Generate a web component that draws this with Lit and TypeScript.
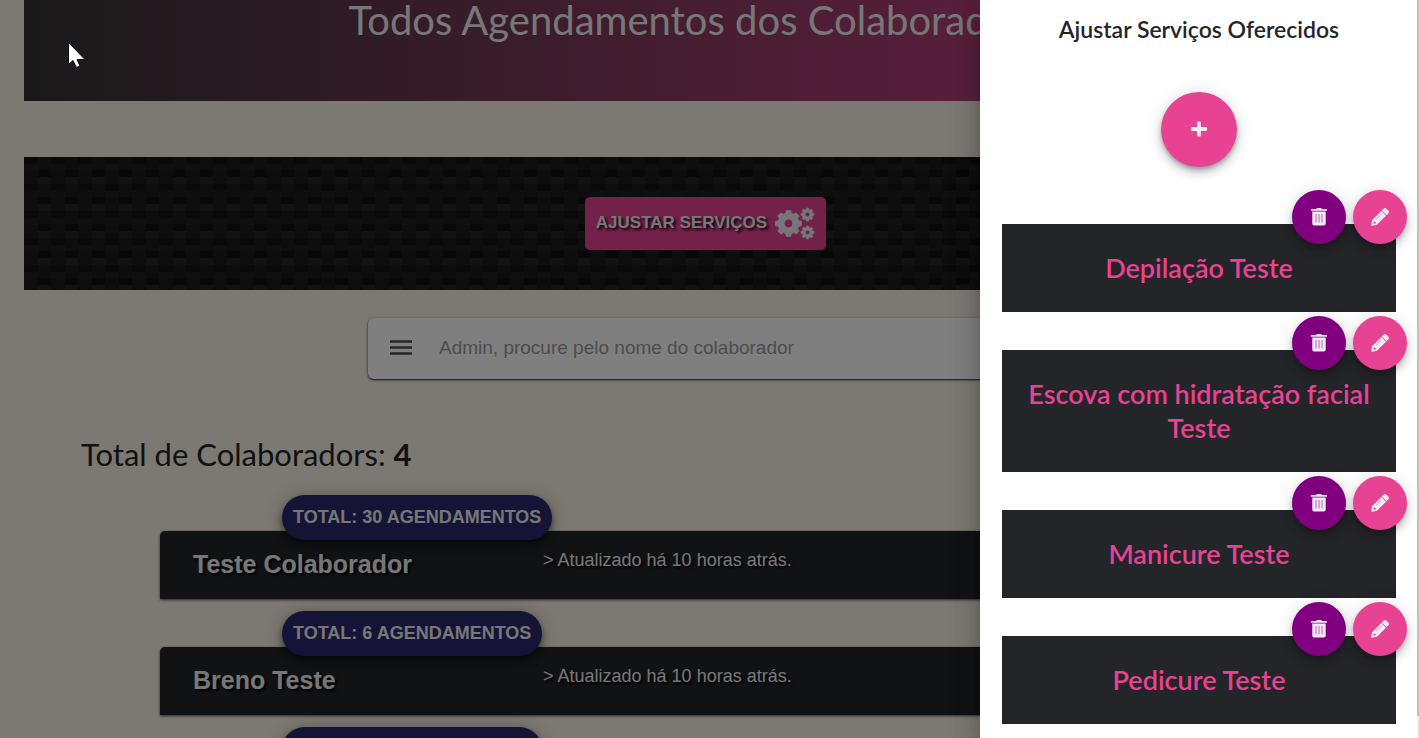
import { LitElement, html, css, svg } from "lit";
import { customElement, property } from "lit/decorators.js";

/** Closed outline of a cog wheel with a round hole in its middle. */
function gearPath(cx: number, cy: number, outer: number, inner: number, hole: number, teeth: number): string {
  const step = (Math.PI * 2) / teeth;
  const points: string[] = [];
  for (let i = 0; i < teeth; i++) {
    const mid = i * step - Math.PI / 2;
    const corners: Array<[number, number]> = [
      [inner, -0.32],
      [outer, -0.22],
      [outer, 0.22],
      [inner, 0.32],
    ];
    for (const [radius, turn] of corners) {
      const angle = mid + turn * step;
      points.push(`${(cx + radius * Math.cos(angle)).toFixed(2)} ${(cy + radius * Math.sin(angle)).toFixed(2)}`);
    }
  }
  return (
    `M${points.join("L")}Z` +
    `M${cx - hole} ${cy}a${hole} ${hole} 0 1 0 ${hole * 2} 0a${hole} ${hole} 0 1 0 ${-hole * 2} 0Z`
  );
}

const gears = html`<svg class="gears" width="40" height="34" viewBox="0 0 40 34" aria-hidden="true">
  ${svg`<path fill-rule="evenodd" fill="currentColor" stroke="currentColor" stroke-width="1" stroke-linejoin="round"
    d="${gearPath(13.5, 17.5, 13, 10.5, 4.4, 8)}" />
  <path fill-rule="evenodd" fill="currentColor" stroke="currentColor" stroke-width=".6" stroke-linejoin="round"
    d="${gearPath(32.5, 8.5, 6.6, 5.2, 2.3, 8)}" />
  <path fill-rule="evenodd" fill="currentColor" stroke="currentColor" stroke-width=".6" stroke-linejoin="round"
    d="${gearPath(32.5, 26.5, 6.6, 5.2, 2.3, 8)}" />`}
</svg>`;

const trash = html`<svg width="18" height="18" viewBox="0 0 18 18" aria-hidden="true">
  <path fill="currentColor" fill-rule="evenodd"
    d="M6.800 0h4.400l.6.9H16.500a.5.5 0 0 1 .5.500v1.300H1V1.400a.5.5 0 0 1 .5-.5h4.700zM2.300 3.600h13.400v12.200a1.700 1.700 0 0 1-1.700 1.700H4A1.700 1.700 0 0 1 2.300 15.800z" />
  <path fill="none" stroke="#b565b5" stroke-width="1" d="M6 6v8.500M9 6v8.500M12 6v8.500" />
</svg>`;

const pencil = html`<svg width="18" height="18" viewBox="0 0 18 18" aria-hidden="true">
  <path fill="currentColor" fill-rule="evenodd"
    d="M12.600 .7a2 2 0 0 1 2.800 0L17.300 2.600a2 2 0 0 1 0 2.800l-1.800 1.800-4.700-4.700zM10.300 3L15 7.700 5.900 16.800 .9 17.700a.6.6 0 0 1-.7-.7L1.100 12.200zM2.700 13.400l-.4 1.300 1.100 1.100 1.300-.4v-1.500z" />
  <path fill="none" stroke="#ec78b0" stroke-width=".9" d="M5.200 11.200L10.400 6" />
</svg>`;

const plus = html`<svg width="16" height="16" viewBox="0 0 16 16" aria-hidden="true">
  <path fill="currentColor"
    d="M7 .5h2a.9.9 0 0 1 .9.900v4.700h5.200a.9.9 0 0 1 .9.900v2a.9.9 0 0 1-.9.900H9.900v4.700a.9.9 0 0 1-.9.900H7a.9.9 0 0 1-.9-.9V9.900H.9A.9.9 0 0 1 0 9V7a.9.9 0 0 1 .9-.9h5.200V1.400A.9.9 0 0 1 7 .5z" />
</svg>`;

@customElement("staff-card")
class StaffCard extends LitElement {
  @property() name = "";
  @property() note = "";
  @property({ type: Number }) total = 0;

  static styles = css`
    :host {
      display: block;
      position: relative;
      font-family: "Liberation Sans", Arial, sans-serif;
    }
    .card {
      display: grid;
      grid-template-columns: 350px 1fr;
      align-items: start;
      padding: 16px 32px 18px 33px;
      background: #232528;
      color: #eee;
      border-radius: 5px 5px 0 0;
      box-shadow: 0 1px 3px rgba(0, 0, 0, 0.7);
      text-shadow: 2px 2px 3px #000;
    }
    .name {
      margin: 0;
      font-size: 25px;
      line-height: 34px;
      font-weight: 700;
    }
    .note {
      margin: 0;
      font-size: 18px;
      line-height: 26px;
    }
    .badge {
      position: absolute;
      left: 122px;
      top: -36px;
      padding: 0 11px;
      border-radius: 23px;
      background: #2a286e;
      color: #eee;
      font-size: 18px;
      line-height: 45px;
      font-weight: 700;
      text-transform: uppercase;
      white-space: nowrap;
      box-shadow: 0 3px 5px -1px rgba(0, 0, 0, 0.4), 0 6px 10px rgba(0, 0, 0, 0.3), 0 1px 18px rgba(0, 0, 0, 0.24);
    }
  `;

  render() {
    return html`
      <article class="card">
        <h3 class="name">${this.name}</h3>
        <p class="note">&gt; ${this.note}</p>
      </article>
      <span class="badge">Total: ${this.total} agendamentos</span>
    `;
  }
}

@customElement("service-item")
class ServiceItem extends LitElement {
  @property() name = "";

  static styles = css`
    :host {
      display: block;
      position: relative;
    }
    .box {
      padding: 27px 20px;
      background: #242529;
    }
    .name {
      margin: 0;
      color: #e84393;
      font-family: Lato, sans-serif;
      font-size: 27px;
      line-height: 34px;
      font-weight: 600;
      text-align: center;
    }
    .actions {
      position: absolute;
      top: -34px;
      right: -11px;
      display: flex;
      gap: 7px;
    }
    .action {
      display: grid;
      place-items: center;
      width: 54px;
      height: 54px;
      padding: 0;
      border: 0;
      border-radius: 50%;
      color: #f3eaf1;
      cursor: pointer;
      box-shadow: 0 3px 5px -1px rgba(0, 0, 0, 0.2), 0 6px 10px rgba(0, 0, 0, 0.14), 0 1px 18px rgba(0, 0, 0, 0.12);
    }
    .remove {
      background: purple;
    }
    .edit {
      background: #e84393;
    }
  `;

  render() {
    return html`
      <div class="box"><h3 class="name">${this.name}</h3></div>
      <div class="actions">
        <button class="action remove" aria-label="Excluir ${this.name}">${trash}</button>
        <button class="action edit" aria-label="Editar ${this.name}">${pencil}</button>
      </div>
    `;
  }
}

@customElement("app-root")
class AppRoot extends LitElement {
  static styles = css`
    :host {
      display: block;
      position: relative;
      height: 100vh;
      overflow: hidden;
      background: #f9f1e4;
      font-family: "Liberation Sans", Arial, sans-serif;
    }
    * {
      box-sizing: border-box;
    }
    .page {
      padding: 0 32px 0 24px;
    }
    .banner {
      padding: 0 0 60px;
      background: linear-gradient(90deg, #333, #e84393);
    }
    .banner-title {
      margin: 0;
      color: #eee;
      font-family: Lato, sans-serif;
      font-size: 40px;
      line-height: 41px;
      font-weight: 400;
      text-align: center;
    }
    /* Woven carbon texture: each layer paints the top left corner of a 27px tile. */
    .toolbar {
      display: flex;
      justify-content: center;
      margin-top: 56px;
      padding: 40px;
      background-color: #1a1a1a;
      background-image: conic-gradient(at 14px 7px, transparent 270deg, #131313 270deg),
        conic-gradient(at 14px 7px, transparent 270deg, #1f1f1f 270deg),
        conic-gradient(at 13px 7px, transparent 270deg, #111 270deg),
        conic-gradient(at 13px 7px, transparent 270deg, #242424 270deg);
      background-position: 0 0, 0 7px, 14px 13px, 14px 20px;
      background-size: 27px 27px;
    }
    .adjust {
      display: flex;
      align-items: center;
      gap: 8px;
      height: 53px;
      padding: 0 11px 2px;
      border: 0;
      border-radius: 5px;
      background: #e84393;
      color: #eee;
      font: 700 17px "Liberation Sans", Arial, sans-serif;
      text-transform: uppercase;
      text-shadow: 2px 2px 3px #000;
      cursor: pointer;
    }
    .search {
      display: flex;
      align-items: center;
      gap: 27px;
      max-width: 675px;
      height: 61px;
      margin: 28px auto 0;
      padding: 0 22px 2px;
      border-radius: 6px;
      background: #fff;
      box-shadow: 0 1px 2px rgba(0, 0, 0, 0.8), 0 1px 4px rgba(0, 0, 0, 0.2);
    }
    .menu {
      display: grid;
      padding: 0;
      border: 0;
      background: none;
      color: #4c4c4c;
      cursor: pointer;
    }
    .query {
      flex: 1;
      min-width: 0;
      padding: 0;
      border: 0;
      outline: 0;
      background: none;
      font: 19px "Liberation Sans", Arial, sans-serif;
      color: #333;
    }
    .query::placeholder {
      color: #999;
      opacity: 1;
    }
    .count {
      margin: 55px 0 0 57px;
      color: #232528;
      font-family: Lato, sans-serif;
      font-size: 31px;
      line-height: 40px;
      font-weight: 400;
    }
    .staff {
      display: grid;
      gap: 48px;
      margin: 57px 136px 0;
    }
    .backdrop {
      position: absolute;
      inset: 0;
      background: rgba(0, 0, 0, 0.5);
    }
    .cursor {
      position: absolute;
      left: 67px;
      top: 41px;
    }
    .drawer {
      position: absolute;
      top: 0;
      right: 0;
      bottom: 0;
      display: flex;
      width: 439px;
      max-width: 100%;
      background: #fff;
      box-shadow: 0 8px 10px -5px rgba(0, 0, 0, 0.2), 0 16px 24px 2px rgba(0, 0, 0, 0.14),
        0 6px 30px 5px rgba(0, 0, 0, 0.12);
    }
    .content {
      flex: 1;
      padding: 13px 21px 0 22px;
      overflow: hidden;
    }
    .rail {
      width: 2px;
      background: #eee;
    }
    .thumb {
      height: 97%;
      background: #c1c1c1;
    }
    .drawer-title {
      margin: 0;
      color: #232528;
      font-family: Lato, sans-serif;
      font-size: 23px;
      line-height: 32px;
      font-weight: 600;
      text-align: center;
    }
    .add {
      display: grid;
      place-items: center;
      width: 76px;
      height: 75px;
      margin: 47px auto 57px;
      padding: 0 0 2px;
      border: 0;
      border-radius: 50%;
      background: #e84393;
      color: #f3eaf1;
      cursor: pointer;
      box-shadow: 0 3px 5px -1px rgba(0, 0, 0, 0.3), 0 6px 10px rgba(0, 0, 0, 0.16), 0 1px 18px rgba(0, 0, 0, 0.12);
    }
    .services {
      display: grid;
      gap: 38px;
    }
  `;

  private staff = [
    { name: "Teste Colaborador", total: 30 },
    { name: "Breno Teste", total: 6 },
    { name: "Ana Teste", total: 2 },
  ];

  private services = ["Depilação Teste", "Escova com hidratação facial Teste", "Manicure Teste", "Pedicure Teste"];

  render() {
    return html`
      <main class="page">
        <header class="banner"><h1 class="banner-title">Todos Agendamentos dos Colaboradores</h1></header>
        <section class="toolbar">
          <button class="adjust">Ajustar serviços ${gears}</button>
        </section>
        <div class="search">
          <button class="menu" aria-label="Menu">
            <svg width="22" height="15" viewBox="0 0 22 15" aria-hidden="true">
              <path fill="currentColor" d="M0 .2h22v2.500H0zM0 6.200h22v2.500H0zM0 12.200h22v2.500H0z" />
            </svg>
          </button>
          <input class="query" type="text" aria-label="Procurar colaborador" placeholder="Admin, procure pelo nome do colaborador" />
        </div>
        <h2 class="count">Total de Colaboradors: <strong>4</strong></h2>
        <div class="staff">
          ${this.staff.map(
            (person) => html`<staff-card
              .name=${person.name}
              .total=${person.total}
              .note=${"Atualizado há 10 horas atrás."}
            ></staff-card>`
          )}
        </div>
      </main>
      <div class="backdrop"></div>
      <aside class="drawer">
        <div class="content">
          <h2 class="drawer-title">Ajustar Serviços Oferecidos</h2>
          <button class="add" aria-label="Adicionar serviço">${plus}</button>
          <div class="services">
            ${this.services.map((name) => html`<service-item .name=${name}></service-item>`)}
          </div>
        </div>
        <div class="rail"><div class="thumb"></div></div>
      </aside>
      <svg class="cursor" width="20" height="28" viewBox="0 0 20 28" aria-hidden="true">
        <path fill="#fff" stroke="#0b0820" stroke-width="1" d="M1.500 1.500V23.500L6 19.500L9.500 26.500L13 25L10 18.500H18z" />
      </svg>
    `;
  }
}
